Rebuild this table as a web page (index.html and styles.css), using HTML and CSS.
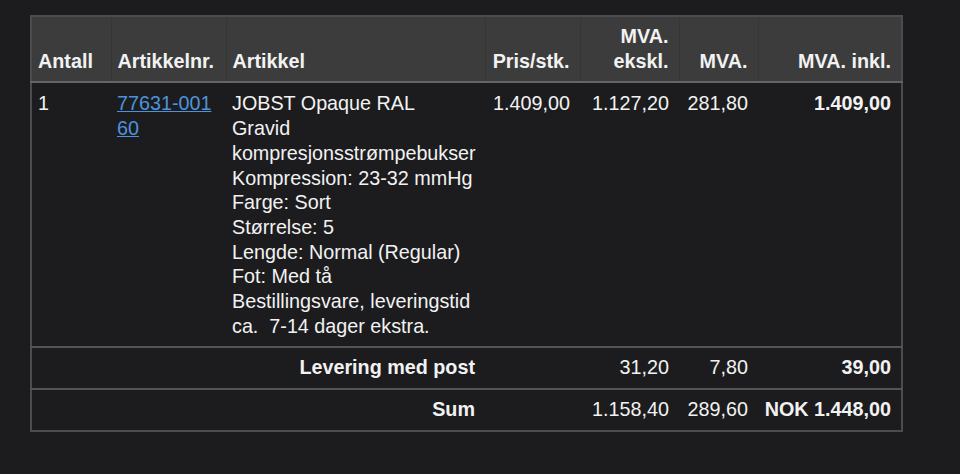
FILE: index.html
```html
<!DOCTYPE html>
<html lang="no">
<head>
<meta charset="utf-8">
<link rel="stylesheet" href="styles.css">
<title>Ordre</title>
</head>
<body>
<div class="page">
<table class="order">
  <colgroup>
    <col class="c-qty"><col class="c-sku"><col class="c-name"><col class="c-price"><col class="c-ex"><col class="c-vat"><col class="c-inc">
  </colgroup>
  <thead>
    <tr>
      <th class="l">Antall</th>
      <th class="l">Artikkelnr.</th>
      <th class="l">Artikkel</th>
      <th>Pris/stk.</th>
      <th>MVA.<br>ekskl.</th>
      <th>MVA.</th>
      <th>MVA. inkl.</th>
    </tr>
  </thead>
  <tbody>
    <tr class="item">
      <td class="l">1</td>
      <td class="l"><a href="#">77631-001<br>60</a></td>
      <td class="l name">JOBST Opaque RAL<br>Gravid<br>kompresjonsstrømpebukser<br>Kompression: 23-32 mmHg<br>Farge: Sort<br>Størrelse: 5<br>Lengde: Normal (Regular)<br>Fot: Med tå<br>Bestillingsvare, leveringstid<br>ca.&nbsp; 7-14 dager ekstra.</td>
      <td>1.409,00</td>
      <td>1.127,20</td>
      <td>281,80</td>
      <td class="b">1.409,00</td>
    </tr>
    <tr class="sub">
      <td colspan="3" class="b">Levering med post</td>
      <td></td>
      <td>31,20</td>
      <td>7,80</td>
      <td class="b">39,00</td>
    </tr>
    <tr class="sub">
      <td colspan="3" class="b">Sum</td>
      <td></td>
      <td>1.158,40</td>
      <td>289,60</td>
      <td class="b">NOK 1.448,00</td>
    </tr>
  </tbody>
</table>
</div>
</body>
</html>
```
FILE: styles.css
```css
html, body {
  margin: 0;
  padding: 0;
  background: #1c1c1e;
}
body {
  font-family: "Liberation Sans", Arial, sans-serif;
  font-size: 19.75px;
  line-height: 24.7px;
  color: #f2f2f2;
}
.page {
  padding: 15px 0 0 30px;
}
.order {
  border-collapse: collapse;
  table-layout: fixed;
  width: 871px;
  border: 2px solid #4c4c4e;
}
.c-qty { width: 80px; }
.c-sku { width: 115px; }
.c-name { width: 259px; }
.c-price { width: 95px; }
.c-ex { width: 99px; }
.c-vat { width: 79px; }
.c-inc { width: 144px; }

th, td {
  text-align: right;
  vertical-align: top;
  padding: 8px 10px 9px 6px;
  white-space: nowrap;
}
.l { text-align: left; }
thead tr {
  background: #3c3c3d;
  border-bottom: 2px solid #646466;
}
th {
  font-weight: bold;
  vertical-align: bottom;
  height: 48px;
  padding-top: 7px;
  padding-bottom: 8px;
  border-left: 1px solid #363637;
}
th:first-child { border-left: none; }
.b { font-weight: bold; }
a {
  color: #4d93dc;
  text-decoration: underline;
}
.item td { padding-bottom: 8px; }
.sub {
  border-top: 2px solid #545456;
}
.sub td {
  padding-top: 7px;
  padding-bottom: 8px;
}
```
